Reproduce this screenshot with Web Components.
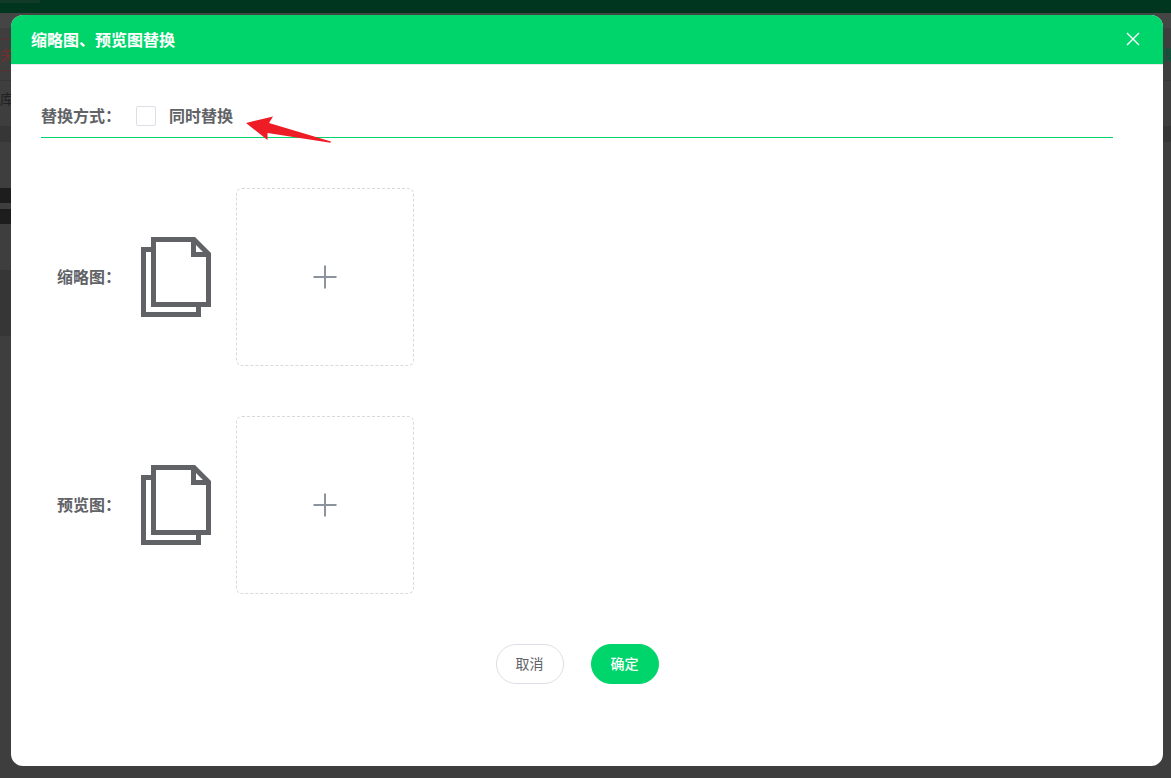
<!DOCTYPE html>
<html lang="zh-CN">
<head>
  <meta charset="UTF-8">
  <meta name="viewport" content="width=device-width, initial-scale=1.0">
  <title>缩略图、预览图替换</title>
  <style>
    body {
      margin: 0;
      min-height: 100vh;
      background-color: #3e3e3e;
      color: #606266;
      font-family: "Open Sans", "Noto Sans CJK SC", sans-serif;
      font-size: 16px;
      --main-color: #00d56c;
      --border-color: #dcdfe6;
    }
  </style>
</head>
<body>
  <page-backdrop></page-backdrop>

  <replace-dialog title-text="缩略图、预览图替换">
    <form-row line>
      <span slot="label">替换方式：</span>
      <check-option>同时替换</check-option>
    </form-row>
    <form-row>
      <span slot="label">缩略图：</span>
      <file-icon></file-icon>
      <upload-box label="上传缩略图"></upload-box>
    </form-row>
    <form-row>
      <span slot="label">预览图：</span>
      <file-icon></file-icon>
      <upload-box label="上传预览图"></upload-box>
    </form-row>
    <round-button slot="footer">取消</round-button>
    <round-button slot="footer" primary>确定</round-button>
  </replace-dialog>

  <script>
    // the dimmed page under the dialog
    class PageBackdrop extends HTMLElement {
      constructor() {
        super();
        this.shadowDOM = this.attachShadow({mode: 'open'});
        this.shadowDOM.innerHTML = `
          <style>
            * {
              box-sizing: border-box;
            }
            :host {
              display: block;
              overflow: hidden;
              font-size: 14px;
              line-height: 20px;
              white-space: nowrap;
            }
            .top {
              height: 13px;
              background-color: #003520;
            }
            .top::before {
              content: "";
              display: block;
              width: 40px;
              height: 3px;
              background-color: #123a28;
            }
            .crumbs {
              height: 15px;
              background-color: #454545;
            }
            .tabs {
              display: flex;
              justify-content: space-between;
              height: 53px;
              padding-top: 11px;
              border-bottom: 1px solid #373737;
            }
            .tab {
              width: 40px;
              height: 32px;
              padding-top: 5px;
              border-top: 1px solid #592f2f;
              border-bottom: 1px solid #592f2f;
              color: #782d2d;
            }
            .more {
              width: 8px;
              padding-top: 6px;
              color: #005836;
            }
            .name {
              height: 45px;
              padding-top: 8px;
              color: #202122;
            }
            .band {
              height: 16px;
              background-color: #363636;
            }
            .thumbs {
              display: grid;
              gap: 6px;
              width: 40px;
              padding: 46px 0;
            }
            .thumbs i {
              height: 15px;
              background-color: #1d1d1d;
            }
            .card {
              width: 40px;
              height: 66px;
              background-color: #363636;
            }
          </style>

          <div class="top"></div>
          <div class="crumbs"></div>
          <div class="tabs">
            <div class="tab">关</div>
            <div class="more">集</div>
          </div>
          <div class="name">库</div>
          <div class="band"></div>
          <div class="thumbs"><i></i><i></i></div>
          <div class="card"></div>
        `;
      }
    }

    class ReplaceDialog extends HTMLElement {
      constructor() {
        super();
        this.shadowDOM = this.attachShadow({mode: 'open'});
        this.render();
      }

      render() {
        this.shadowDOM.innerHTML = `
          <style>
            * {
              box-sizing: border-box;
            }
            :host {
              position: absolute;
              inset: 0;
              display: flex;
              padding: 15px 8px 12px 11px;
            }
            .dialog {
              flex: 1;
              border-radius: 12px;
              overflow: hidden;
              background-color: white;
            }
            header {
              display: flex;
              align-items: center;
              justify-content: space-between;
              height: 50px;
              padding: 0 20px;
              border-bottom: 1px solid #e8eaec;
              background-color: var(--main-color);
              background-clip: padding-box;
              color: white;
            }
            h2 {
              margin: 0;
              font-size: 16px;
              line-height: 24px;
            }
            .close {
              display: flex;
              padding: 2px;
              border: 0;
              background: none;
              color: inherit;
              cursor: pointer;
            }
            .content {
              display: grid;
              gap: 50px;
              padding: 30px 50px 0 30px;
            }
            footer {
              display: flex;
              justify-content: center;
              gap: 27px;
            }
          </style>

          <section class="dialog" role="dialog" aria-labelledby="title">
            <header>
              <h2 id="title">${this.getAttribute('title-text')}</h2>
              <button class="close" type="button" aria-label="关闭">
                <svg width="16" height="16" viewBox="0 0 16 16" fill="none" stroke="currentColor" stroke-width="1.4">
                  <path d="M2 1L14 13M14 1L2 13"/>
                </svg>
              </button>
            </header>
            <div class="content">
              <slot></slot>
              <footer><slot name="footer"></slot></footer>
            </div>
          </section>
        `;
      }
    }

    class FormRow extends HTMLElement {
      constructor() {
        super();
        this.shadowDOM = this.attachShadow({mode: 'open'});
        this.shadowDOM.innerHTML = `
          <style>
            :host {
              display: flex;
              align-items: center;
              font-weight: bold;
              line-height: 24px;
            }
            :host([line]) {
              height: 42px;
              border-bottom: 1px solid var(--main-color);
            }
            .label {
              flex: none;
              width: 80px;
              text-align: right;
              white-space: nowrap;
            }
            .field {
              display: flex;
              align-items: center;
              gap: 25px;
              padding-left: 20px;
            }
            :host([line]) .field {
              padding-left: 15px;
            }
          </style>

          <div class="label"><slot name="label"></slot></div>
          <div class="field"><slot></slot></div>
        `;
      }
    }

    class CheckOption extends HTMLElement {
      constructor() {
        super();
        this.shadowDOM = this.attachShadow({mode: 'open'});
        this.shadowDOM.innerHTML = `
          <style>
            :host {
              display: flex;
              align-items: center;
            }
            label {
              display: flex;
              align-items: center;
              gap: 13px;
              cursor: pointer;
            }
            input {
              appearance: none;
              box-sizing: border-box;
              width: 20px;
              height: 20px;
              margin: 0;
              border: 1px solid var(--border-color);
              border-radius: 2px;
              background-color: white;
            }
            input:checked {
              border-color: var(--main-color);
              background-color: var(--main-color);
            }
            .mark {
              position: relative;
              width: 0;
              height: 0;
            }
            /* arrow hangs over the line under the row */
            .mark svg {
              position: absolute;
              left: 12px;
              top: 0;
            }
          </style>

          <label><input type="checkbox"><slot></slot></label>
          <div class="mark">
            <svg width="88" height="28" viewBox="0 0 88 28" aria-hidden="true">
              <path fill="#ee1c25" d="M1 7L28 0.5L24 7L86 25.5L85.5 26.8L22.5 17L22.5 24Z"/>
            </svg>
          </div>
        `;
      }
    }

    class FileIcon extends HTMLElement {
      constructor() {
        super();
        this.shadowDOM = this.attachShadow({mode: 'open'});
        this.shadowDOM.innerHTML = `
          <style>
            :host {
              display: flex;
            }
          </style>
          <svg width="70" height="80" viewBox="0 0 70 80" fill="currentColor" aria-hidden="true">
            <path fill-rule="evenodd" d="M10 0H54L70 16V70H10ZM15 5V65H65V20H50V5ZM55 8V15H62Z"/>
            <path d="M0 10H10V15H5V75H55V70H60V80H0Z"/>
          </svg>
        `;
      }
    }

    class UploadBox extends HTMLElement {
      constructor() {
        super();
        this.shadowDOM = this.attachShadow({mode: 'open'});
        this.shadowDOM.innerHTML = `
          <style>
            :host {
              display: block;
            }
            button {
              display: flex;
              align-items: center;
              justify-content: center;
              box-sizing: border-box;
              width: 178px;
              height: 178px;
              padding: 0;
              border: 1px dashed #d9d9d9;
              border-radius: 6px;
              background-color: white;
              color: #8c939d;
              cursor: pointer;
            }
          </style>
          <button type="button" aria-label="${this.getAttribute('label')}">
            <svg width="24" height="24" viewBox="0 0 24 24" stroke="currentColor" stroke-width="2">
              <path d="M12 0.5V23.5M0.5 12H23.5"/>
            </svg>
          </button>
        `;
      }
    }

    class RoundButton extends HTMLElement {
      constructor() {
        super();
        this.shadowDOM = this.attachShadow({mode: 'open'});
        this.shadowDOM.innerHTML = `
          <style>
            :host {
              display: block;
            }
            button {
              box-sizing: border-box;
              width: 68px;
              height: 40px;
              padding: 0;
              border: 1px solid var(--border-color);
              border-radius: 20px;
              background-color: white;
              color: #606266;
              font-family: inherit;
              font-size: 14px;
              line-height: 20px;
              cursor: pointer;
            }
            :host([primary]) button {
              border-color: var(--main-color);
              background-color: var(--main-color);
              color: white;
              font-weight: 500;
            }
          </style>
          <button type="button"><slot></slot></button>
        `;
      }
    }

    customElements.define('page-backdrop', PageBackdrop);
    customElements.define('replace-dialog', ReplaceDialog);
    customElements.define('form-row', FormRow);
    customElements.define('check-option', CheckOption);
    customElements.define('file-icon', FileIcon);
    customElements.define('upload-box', UploadBox);
    customElements.define('round-button', RoundButton);
  </script>
</body>
</html>
